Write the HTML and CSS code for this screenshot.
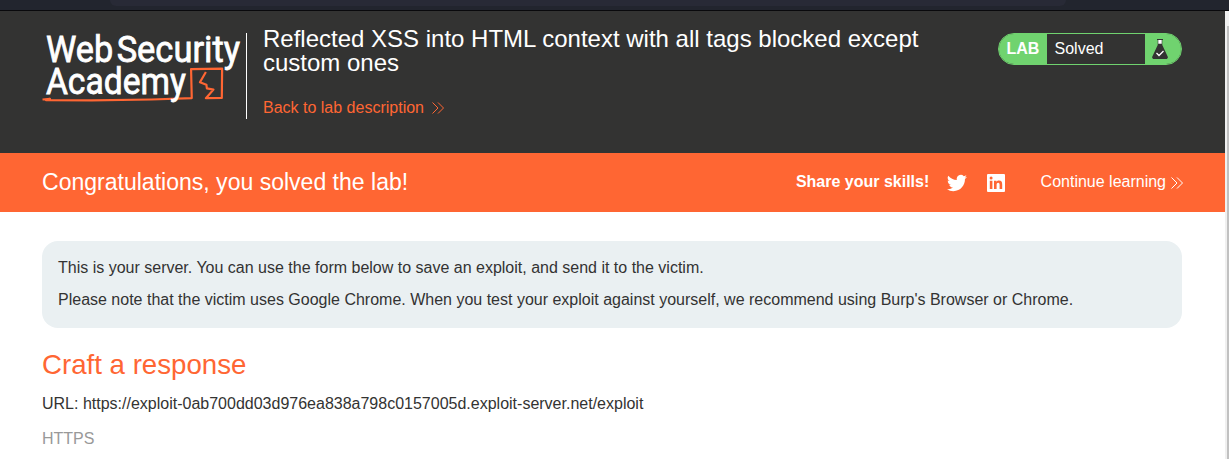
FILE: index.html
```html
<!DOCTYPE html>
<html lang="en">
<head>
<meta charset="utf-8">
<title>Exploit Server</title>
<link rel="stylesheet" href="styles.css">
</head>
<body>
<div class="browser-bar"><div class="address"></div></div>
<div class="viewport">
  <div class="page">
    <header class="header">
      <svg class="logo" width="205" height="86" viewBox="0 0 205 86" role="img" aria-label="Web Security Academy">
        <path class="logo-line" d="M.5 66.600 8 66l-4 1.200 46 .3 60-.9 40.500-1.400-.7-29.200 31.200-.5-.3 29.500-16 .3 7.600-8.600-6.600-1.200-.5-3.700-6.500-2.500 6-10.300"/>
        <text class="logo-text" x="4" y="28.500" textLength="67.500" lengthAdjust="spacingAndGlyphs">Web</text>
        <text class="logo-text" x="75" y="28.500" textLength="124" lengthAdjust="spacingAndGlyphs">Security</text>
        <text class="logo-text" x="4" y="61" textLength="140.500" lengthAdjust="spacingAndGlyphs">Academy</text>
      </svg>
      <div class="title-box">
        <h1 class="title">Reflected XSS into HTML context with all tags blocked except custom ones</h1>
        <a class="back">Back to lab description
          <svg width="12" height="12" viewBox="0 0 12 12"><path class="chevrons" d="M.5.5 6 6 .5 11.500M6 .5 11.500 6 6 11.500"/></svg>
        </a>
      </div>
      <div class="status">
        <span class="status-label">LAB</span>
        <span class="status-value">Solved</span>
        <span class="status-icon">
          <svg width="16" height="20" viewBox="0 0 16 20"><path fill="#333332" d="M5 0h6v1h-.7v5L16 18.200 15 20H1l-1-1.800L5.700 6V1H5z"/><path fill="#fff" d="M6.300 1h3.400v3.800H6.300z"/><path fill="none" stroke="#fff" stroke-width="1.300" d="m4.500 14 2.500 2.500 4.500-4.500"/></svg>
        </span>
      </div>
    </header>
    <section class="banner">
      <h2 class="banner-title">Congratulations, you solved the lab!</h2>
      <span class="share">Share your skills!</span>
      <svg class="twitter" width="20" height="20" viewBox="0 0 24 24"><path fill="#fff" d="M23.950 4.570a10 10 0 0 1-2.820.780 4.960 4.960 0 0 0 2.160-2.730c-.950.560-2 .960-3.130 1.190a4.920 4.920 0 0 0-8.380 4.480C7.690 8.100 4.070 6.130 1.640 3.160a4.930 4.930 0 0 0 1.520 6.580 4.900 4.900 0 0 1-2.230-.620v.060a4.920 4.920 0 0 0 3.950 4.830 5 5 0 0 1-2.210.080 4.940 4.940 0 0 0 4.600 3.420A9.870 9.870 0 0 1 0 19.540a14 14 0 0 0 7.550 2.210c9.050 0 14-7.500 14-13.980 0-.210 0-.420-.020-.630a9.940 9.940 0 0 0 2.460-2.550z"/></svg>
      <svg class="linkedin" width="18" height="18" viewBox="0 0 18 18"><rect width="18" height="18" rx="1" fill="#fff"/><path fill="#ff6633" d="M2.800 6.800h2.600V15H2.800zM4.100 2.600a1.500 1.500 0 1 1 0 3 1.500 1.500 0 0 1 0-3zM7 6.800h2.500v1.100c.5-.9 1.400-1.300 2.500-1.300 2.500 0 3.200 1.500 3.200 3.900V15h-2.600v-4c0-1.200-.2-2.200-1.400-2.200-1.300 0-1.600 1-1.600 2.200v4H7z"/></svg>
      <a class="continue">Continue learning
        <svg width="12" height="12" viewBox="0 0 12 12"><path class="chevrons" d="M.5.5 6 6 .5 11.500M6 .5 11.500 6 6 11.500"/></svg>
      </a>
    </section>
    <main class="content">
      <div class="notice">
        <p>This is your server. You can use the form below to save an exploit, and send it to the victim.</p>
        <p>Please note that the victim uses Google Chrome. When you test your exploit against yourself, we recommend using Burp's Browser or Chrome.</p>
      </div>
      <h3 class="craft">Craft a response</h3>
      <p class="url">URL: https://exploit-0ab700dd03d976ea838a798c0157005d.exploit-server.net/exploit</p>
      <p class="https">HTTPS</p>
    </main>
  </div>
  <div class="scrollbar"><div class="thumb"></div></div>
</div>
</body>
</html>
```

FILE: styles.css
```css
* { box-sizing: border-box; }
body {
  margin: 0;
  height: 459px;
  overflow: hidden;
  display: flex;
  flex-direction: column;
  background: #fff;
  color: #333332;
  font: 16px/20px "Liberation Sans", Arial, sans-serif;
}
h1, h2, h3, p { margin: 0; font-weight: 400; }
svg { flex: none; display: block; }
.browser-bar {
  height: 11px;
  flex: none;
  background: #22252e;
  border-bottom: 1px solid #09090c;
  padding: 0 163px 0 110px;
}
.address { height: 6px; background: #282a36; border-radius: 0 0 16px 16px; }
.viewport { flex: 1; display: flex; min-height: 0; }
.page { flex: 1; }
.scrollbar { width: 4px; background: #f0f0f0; padding: 15px 0 0 2px; }
.thumb { height: 100%; background: #c1c1c1; }
.header {
  height: 142px;
  background: #333332;
  display: flex;
  align-items: flex-start;
  padding: 22px 43px 0 42px;
}
.logo { overflow: visible; border-right: 1px solid #fff; }
.logo-text { font: 400 38px Roboto, sans-serif; fill: #fff; stroke: #fff; stroke-width: 0.8; }
.logo-line { fill: none; stroke: #ff6633; stroke-width: 2.2; stroke-linejoin: round; }
.title-box { width: 700px; margin: -6px 0 0 16px; }
.title { font-size: 24px; line-height: 24px; color: #fff; }
.back { display: flex; align-items: center; gap: 8.5px; margin-top: 23px; color: #ff6633; }
.chevrons { fill: none; stroke: currentColor; stroke-width: 1; }
.status {
  margin-left: auto;
  width: 184px;
  height: 32px;
  display: flex;
  border: 1px solid #70d36f;
  border-radius: 16px;
  overflow: hidden;
  color: #fff;
  line-height: 30px;
}
.status-label { width: 48px; padding-left: 7.5px; background: #70d36f; font-weight: 700; }
.status-value { flex: 1; padding-left: 7.5px; }
.status-icon { width: 36px; padding: 5px 0 0 7px; background: #70d36f; }
.banner {
  height: 59px;
  padding: 0 42.5px 1px 42px;
  display: flex;
  align-items: center;
  background: #ff6633;
  color: #fff;
}
.banner-title { font-size: 23.040px; line-height: 28px; }
.share { margin-left: auto; font-weight: 700; }
.twitter { margin: 2px 0 0 18px; }
.linkedin { margin: 1px 0 0 20px; }
.continue { display: flex; align-items: center; gap: 4.5px; margin-left: 35.3px; }
.continue svg { margin-top: 2px; }
.content { padding: 29px 43px 0 42px; }
.notice {
  height: 87px;
  padding: 17px 16px 0;
  border-radius: 16px;
  background: #eaf0f2;
  display: flex;
  flex-direction: column;
  gap: 12px;
}
.craft { margin-top: 20px; font-size: 27.650px; line-height: 34px; color: #ff6633; }
.url { margin-top: 12px; }
.https { margin-top: 15px; color: #999; }
```
